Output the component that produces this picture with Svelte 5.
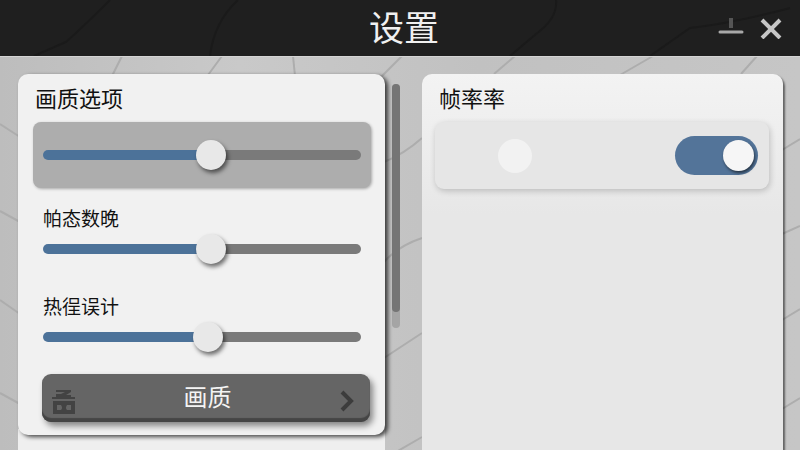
<script>
  let sliders = $state([
    { id: 'quality', label: '画质选项', value: 53 },
    { id: 'state', label: '帕态数晚', value: 53 },
    { id: 'heat', label: '热徎误计', value: 52 },
  ]);
  let frameRate = $state(true);

  // Centre of the 30px thumb along the track
  const fill = (v) => `calc(15px + (100% - 30px) * ${v / 100})`;
</script>

<div class="screen">
  <svg class="backdrop" viewBox="0 0 800 450" preserveAspectRatio="none" aria-hidden="true">
    <g fill="none" stroke="#adadad" stroke-width="2">
      <path d="M122 56 L112 76 M222 56 L208 75 M293 56 L295 76 M402 56 L380 78" />
      <path d="M515 56 L494 74 M653 56 L620 75 M757 56 L741 74" />
      <path d="M0 124 L20 137 M0 211 L20 222 M0 300 L20 314 M0 393 L20 404" />
      <path d="M384 162 Q404 154 422 138 M384 262 Q398 246 422 238 M384 358 L422 333 M384 459 L422 437" />
      <path d="M782 150 L800 139 M782 234 L800 226 M782 320 L800 309 M782 409 L800 398" />
    </g>
  </svg>

  <header>
    <svg class="header-lines" viewBox="0 0 800 56" preserveAspectRatio="none" aria-hidden="true">
      <g fill="none" stroke="#1a1a1a" stroke-width="2">
        <path d="M110 0 Q84 26 66 42 L34 56 M238 0 Q214 22 210 56" />
        <path d="M556 0 Q558 18 536 34 L510 56 M790 8 Q730 24 690 28 L650 56" />
      </g>
    </svg>
    <h1>设置</h1>
    <div class="window-actions">
      <button type="button" aria-label="最小化">
        <svg width="26" height="22" viewBox="0 0 26 22">
          <path d="M13 1v10" stroke="#555" stroke-width="4" />
          <path d="M2 15h22" stroke="#a8a8a8" stroke-width="3" stroke-linecap="round" />
        </svg>
      </button>
      <button type="button" aria-label="关闭">
        <svg width="22" height="22" viewBox="0 0 22 22">
          <path d="M2 3l18 18M20 3l-18 18" stroke="#c6c6c6" stroke-width="4" />
        </svg>
      </button>
    </div>
  </header>

  <main>
    <div class="column">
      <section class="card">
        {#each sliders as s, i (s.id)}
          <div class="setting" class:lead={i === 0}>
            <label for={s.id}>{s.label}</label>
            <div class="track">
              <input
                id={s.id}
                type="range"
                min="0"
                max="100"
                bind:value={s.value}
                style:--fill={fill(s.value)}
              />
            </div>
          </div>
        {/each}
        <button type="button" class="more">
          <svg width="24" height="25" viewBox="0 0 24 25" aria-hidden="true">
            <path
              d="M4 1h15v2l-5 3h5v2H4V5h5l4-2H4zM0 8h23v2H0zM1 12h22v13H1zM5 16v5h4q2-2 0-5zM19 16v5h-4q-2-2 0-5z"
              fill="#434343"
              fill-rule="evenodd"
            />
          </svg>
          <span>画质</span>
          <svg width="16" height="22" viewBox="0 0 16 22" aria-hidden="true">
            <path d="M3 2l9 9-9 9" fill="none" stroke="#3c3c3c" stroke-width="4" />
          </svg>
        </button>
      </section>
      <section class="next"></section>
    </div>

    <div class="scrollbar"><div class="thumb"></div></div>

    <section class="card side">
      <label class="title" for="fps">帧率率</label>
      <div class="row">
        <span class="ghost"></span>
        <input id="fps" class="switch" type="checkbox" role="switch" bind:checked={frameRate} />
      </div>
    </section>
  </main>
</div>

<style>
  :global(body) {
    margin: 0;
  }

  .screen {
    position: relative;
    display: flex;
    flex-direction: column;
    height: 100vh;
    overflow: hidden;
    background: linear-gradient(90deg, #bdbdbd, #c9c9c9 30%, #c1c1c1 60%, #c6c6c6);
    color: #111;
    font-family: 'Noto Sans CJK SC', 'Noto Sans', sans-serif;
  }

  .backdrop,
  .header-lines {
    position: absolute;
    inset: 0;
    width: 100%;
    height: 100%;
  }

  header {
    position: relative;
    display: grid;
    grid-template-columns: 1fr auto 1fr;
    align-items: center;
    height: 57px;
    flex: none;
    padding: 0 18px;
    background: #1f1f1f;
    border-bottom: 1px solid #d4d4d4;
    box-sizing: border-box;
  }

  h1 {
    position: relative;
    grid-column: 2;
    margin: 0 0 4px 8px;
    color: #f0f0f0;
    font-size: 35px;
    font-weight: 400;
    line-height: 52px;
  }

  .window-actions {
    position: relative;
    display: flex;
    justify-content: flex-end;
    gap: 16px;
  }

  button {
    padding: 0;
    border: 0;
    background: none;
    font: inherit;
    cursor: pointer;
  }

  .window-actions button,
  .window-actions svg {
    display: block;
  }

  main {
    position: relative;
    display: grid;
    grid-template-columns: 367fr 37px 361fr;
    flex: 1;
    min-height: 0;
    padding: 17px 17px 0 18px;
  }

  .column {
    display: flex;
    flex-direction: column;
    min-height: 0;
  }

  .card {
    position: relative;
    flex: none;
    padding: 7px 14px 13px 15px;
    border-radius: 10px;
    background: #f1f1f1;
    box-shadow: 3px 2px 4px rgba(0, 0, 0, 0.7);
  }

  .next {
    flex: 1;
    margin-top: -6px;
    background: #efefef;
  }

  .column .card {
    z-index: 1;
  }

  .setting {
    margin-bottom: 12px;
    padding: 0 10px;
  }

  .setting:nth-child(3) {
    margin-bottom: 7px;
  }

  .setting label {
    display: block;
    font-size: 19px;
    line-height: 30px;
  }

  .setting .track {
    display: flex;
    align-items: center;
    height: 32px;
    padding-bottom: 14px;
  }

  .setting.lead {
    margin-bottom: 15px;
    padding: 0;
  }

  .setting.lead label,
  .title {
    display: block;
    margin-bottom: 9px;
    padding-left: 2px;
    font-size: 22px;
    line-height: 32px;
  }

  .setting.lead .track {
    height: 66px;
    padding: 0 10px;
    border-radius: 8px;
    background: #adadad;
    box-shadow: 1px 1px 3px rgba(0, 0, 0, 0.3);
  }

  input[type='range'] {
    appearance: none;
    width: 100%;
    height: 10px;
    margin: 0;
    border-radius: 5px;
    background: linear-gradient(90deg, #4c7299 var(--fill), #7a7a7a var(--fill));
  }

  input[type='range']::-webkit-slider-thumb {
    appearance: none;
    width: 30px;
    height: 30px;
    border-radius: 50%;
    background: #e8e8e8;
    box-shadow: 2px 3px 4px rgba(0, 0, 0, 0.55);
  }

  .more {
    display: flex;
    align-items: center;
    justify-content: space-between;
    width: calc(100% - 10px);
    height: 48px;
    margin-left: 9px;
    padding: 0 15px 0 10px;
    border-radius: 9px;
    background: #656565;
    box-shadow:
      inset 0 -4px 1px #454545,
      3px 4px 6px rgba(0, 0, 0, 0.45);
    color: #f4f4f4;
    font-size: 24px;
    line-height: 46px;
  }

  .more span {
    margin-bottom: 4px;
  }

  .more svg {
    margin-top: 6px;
  }

  .scrollbar {
    width: 8px;
    height: 244px;
    margin: 10px 0 0 7px;
    border-radius: 4px;
    background: #a5a5a5;
  }

  .thumb {
    height: 228px;
    border-radius: 4px;
    background: #757575;
  }

  .side {
    padding: 7px 14px 0 13px;
    border-radius: 10px 10px 0 0;
    background: linear-gradient(#f3f3f3, #efefef 50px, #e7e7e7 140px);
    box-shadow: 2px 2px 2px rgba(0, 0, 0, 0.5);
  }

  .title {
    padding-left: 4px;
  }

  .row {
    display: flex;
    align-items: center;
    justify-content: space-between;
    height: 67px;
    padding: 0 11px 0 63px;
    border-radius: 9px;
    background: #e6e6e6;
    box-shadow: 1px 2px 6px rgba(0, 0, 0, 0.2);
  }

  .ghost {
    width: 34px;
    height: 34px;
    border-radius: 50%;
    background: #f2f2f2;
  }

  .switch {
    appearance: none;
    display: flex;
    align-items: center;
    width: 83px;
    height: 39px;
    margin: 0;
    padding: 4px;
    border-radius: 20px;
    background: #8a8a8a;
    box-sizing: border-box;
    cursor: pointer;
  }

  .switch::before {
    content: '';
    width: 31px;
    height: 31px;
    border-radius: 50%;
    background: #f6f6f6;
    box-shadow: 1px 2px 3px rgba(0, 0, 0, 0.55);
  }

  .switch:checked {
    justify-content: flex-end;
    background: #537499;
  }
</style>
